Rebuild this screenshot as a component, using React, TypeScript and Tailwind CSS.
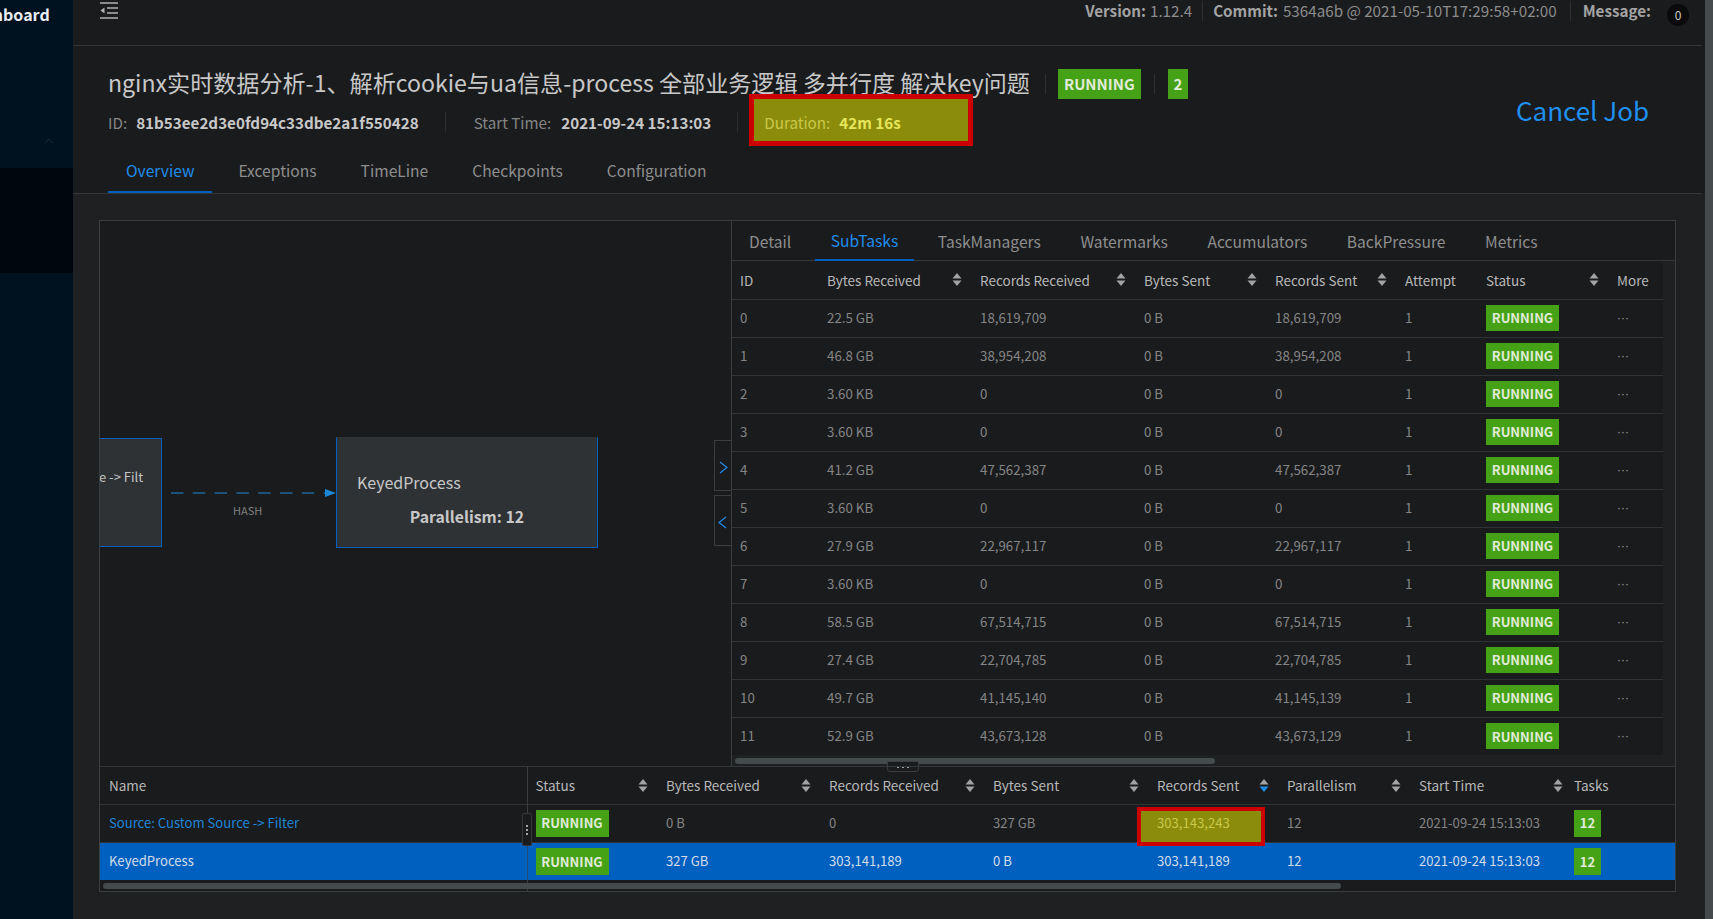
import type { ReactNode } from "react";

const font = { fontFamily: '"Noto Sans CJK SC", "Noto Sans", sans-serif' };

type Col = { title: string; width: number; sort?: boolean; active?: boolean; iconRight?: number };

const subtaskCols: Col[] = [
  { title: "ID", width: 87 },
  { title: "Bytes Received", width: 153, sort: true },
  { title: "Records Received", width: 164, sort: true },
  { title: "Bytes Sent", width: 131, sort: true },
  { title: "Records Sent", width: 130, sort: true },
  { title: "Attempt", width: 81 },
  { title: "Status", width: 131, sort: true },
  { title: "More", width: 54 },
];

const subtasks = [
  ["0", "22.5 GB", "18,619,709", "18,619,709"],
  ["1", "46.8 GB", "38,954,208", "38,954,208"],
  ["2", "3.60 KB", "0", "0"],
  ["3", "3.60 KB", "0", "0"],
  ["4", "41.2 GB", "47,562,387", "47,562,387"],
  ["5", "3.60 KB", "0", "0"],
  ["6", "27.9 GB", "22,967,117", "22,967,117"],
  ["7", "3.60 KB", "0", "0"],
  ["8", "58.5 GB", "67,514,715", "67,514,715"],
  ["9", "27.4 GB", "22,704,785", "22,704,785"],
  ["10", "49.7 GB", "41,145,140", "41,145,139"],
  ["11", "52.9 GB", "43,673,128", "43,673,129"],
];

const vertexCols: Col[] = [
  { title: "Status", width: 131, sort: true },
  { title: "Bytes Received", width: 163, sort: true },
  { title: "Records Received", width: 164, sort: true },
  { title: "Bytes Sent", width: 164, sort: true },
  { title: "Records Sent", width: 130, sort: true, active: true },
  { title: "Parallelism", width: 132, sort: true },
  { title: "Start Time", width: 155, sort: true, iconRight: 3 },
  { title: "Tasks", width: 109 },
];

const SortIcon = ({ active }: { active?: boolean }) => (
  <svg width="10" height="15" viewBox="0 0 10 15" className="shrink-0">
    <path d="M5 1 9.5 6.5H.5z" fill="#a3a3a3" />
    <path d="M.5 8.5h9L5 14z" fill={active ? "#1f8ceb" : "#a3a3a3"} />
  </svg>
);

const Badge = ({ children, className }: { children: ReactNode; className: string }) => (
  <span className={`inline-flex items-center justify-center bg-[#45a116] font-bold text-[#e0ebd8] ${className}`}>
    {children}
  </span>
);

const HeadCell = ({ col }: { col: Col }) => (
  <th className="px-2 text-left font-normal">
    <div className="flex items-center justify-between">
      <span className="whitespace-nowrap text-[13.5px] text-[#b8b8b8]">{col.title}</span>
      {col.sort && (
        <span className={col.iconRight ? "mr-[-5px]" : "mr-[2px]"}>
          <SortIcon active={col.active} />
        </span>
      )}
    </div>
  </th>
);

const Sep = ({ className = "" }: { className?: string }) => (
  <span className={`inline-block h-[20px] w-px bg-[#2b2e30] ${className}`} />
);

const SubtaskTable = () => (
  <table className="w-[931px] table-fixed border-collapse">
    <colgroup>
      {subtaskCols.map((c) => (
        <col key={c.title} style={{ width: c.width }} />
      ))}
    </colgroup>
    <thead>
      <tr className="h-[38px] border-b border-[#303437]">
        {subtaskCols.map((c) => (
          <HeadCell key={c.title} col={c} />
        ))}
      </tr>
    </thead>
    <tbody className="text-[13.3px] text-[#858585]">
      {subtasks.map((r) => (
        <tr key={r[0]} className="h-[38px] border-b border-[#303437] last:border-b-0">
          <td className="px-2">{r[0]}</td>
          <td className="px-2">{r[1]}</td>
          <td className="px-2">{r[2]}</td>
          <td className="px-2">0 B</td>
          <td className="px-2">{r[3]}</td>
          <td className="px-2">1</td>
          <td className="px-2">
            <Badge className="h-[26px] w-[73px] align-middle text-[13px]">RUNNING</Badge>
          </td>
          <td className="px-2 font-['Liberation_Sans'] text-[12px] text-[#9a9a9a]">···</td>
        </tr>
      ))}
    </tbody>
  </table>
);

const VertexTable = () => (
  <table className="w-[1575px] table-fixed border-collapse">
    <colgroup>
      <col style={{ width: 427 }} />
      {vertexCols.map((c) => (
        <col key={c.title} style={{ width: c.width }} />
      ))}
    </colgroup>
    <thead>
      <tr className="h-[37px] border-b border-[#303437]">
        <th className="border-r border-[#3a3e40] pl-[9px] text-left text-[13.5px] font-normal text-[#b8b8b8]">Name</th>
        {vertexCols.map((c) => (
          <HeadCell key={c.title} col={c} />
        ))}
      </tr>
    </thead>
    <tbody className="text-[13.1px] text-[#858585]">
      <tr className="h-[38px] border-b border-[#303437]">
        <td className="border-r border-[#3a3e40] pl-[9px] text-[#1f86d8]">Source: Custom Source -&gt; Filter</td>
        <td className="px-2">
          <Badge className="h-[27px] w-[73px] align-middle text-[13px]">RUNNING</Badge>
        </td>
        <td className="px-2">0 B</td>
        <td className="px-2">0</td>
        <td className="px-2">327 GB</td>
        <td className="relative px-2">
          {/* red annotation drawn over the cell */}
          <div className="absolute left-[-12px] right-[14px] top-[2px] h-[39px] border-[4px] border-[#cc0000] bg-[#8c8c0c]" />
          <span className="relative text-[#c9c84a]">303,143,243</span>
        </td>
        <td className="px-2">12</td>
        <td className="px-2">2021-09-24 15:13:03</td>
        <td className="px-2">
          <Badge className="h-[27px] w-[27px] align-middle text-[13px]">12</Badge>
        </td>
      </tr>
      <tr className="h-[38px] bg-[#0060c0] text-[#d3dde8]">
        <td className="border-r border-[#1d4a78] pl-[9px]">KeyedProcess</td>
        <td className="px-2">
          <Badge className="h-[27px] w-[73px] align-middle text-[13px]">RUNNING</Badge>
        </td>
        <td className="px-2">327 GB</td>
        <td className="px-2">303,141,189</td>
        <td className="px-2">0 B</td>
        <td className="px-2">303,141,189</td>
        <td className="px-2">12</td>
        <td className="px-2">2021-09-24 15:13:03</td>
        <td className="px-2">
          <Badge className="h-[27px] w-[27px] align-middle text-[13px]">12</Badge>
        </td>
      </tr>
    </tbody>
  </table>
);

const Graph = () => (
  <div className="relative h-[545px] w-[631px] overflow-hidden">
    {/* nodes sit on a free canvas */}
    <div className="absolute left-[-40px] top-[217px] flex h-[109px] w-[102px] border border-[#0060c0] bg-[#2e3235] pl-[38px] pt-[28px] text-[13px] text-[#c4c4c4]">
      <span className="whitespace-nowrap">e -&gt; Filt</span>
    </div>
    <svg className="absolute left-[71px] top-[262px]" width="166" height="20" viewBox="0 0 166 20">
      <line x1="0" y1="10" x2="154" y2="10" stroke="#1e88d8" strokeWidth="1" strokeDasharray="12.5 9.3" />
      <path d="M154 6 165 10 154 14z" fill="#1e88d8" />
    </svg>
    <span className="absolute left-[133px] top-[281px] text-[11px] text-[#808080]">HASH</span>
    <div className="absolute left-[236px] top-[216px] h-[111px] w-[262px] border border-[#0060c0] border-t-[#2e3235] bg-[#2e3235] text-[#c8c8c8]">
      <div className="pl-[20px] pt-[32px] text-[16px] leading-[24px]">KeyedProcess</div>
      <div className="mt-[11px] text-center text-[15.8px] font-bold leading-[24px]">Parallelism: 12</div>
    </div>
    <div className="absolute right-0 top-[219px] flex h-[51px] w-[17px] items-center justify-center border border-r-0 border-[#3a3e40] pt-[4px]">
      <svg width="9" height="13" viewBox="0 0 9 13" fill="none" stroke="#1f8ceb" strokeWidth="1.2">
        <path d="M1 1l7 5.5L1 12" />
      </svg>
    </div>
    <div className="absolute right-0 top-[274px] flex h-[51px] w-[17px] items-center justify-center border border-r-0 border-[#3a3e40] pr-[1px] pt-[4px]">
      <svg width="9" height="13" viewBox="0 0 9 13" fill="none" stroke="#1f8ceb" strokeWidth="1.2">
        <path d="M8 1L1 6.5 8 12" />
      </svg>
    </div>
  </div>
);

const drawerTabs = ["Detail", "SubTasks", "TaskManagers", "Watermarks", "Accumulators", "BackPressure", "Metrics"];
const jobTabs = ["Overview", "Exceptions", "TimeLine", "Checkpoints", "Configuration"];

export default function App() {
  return (
    <div className="flex h-[919px] w-[1713px] overflow-hidden bg-[#1e2021]" style={font}>
      {/* sidebar */}
      <aside className="w-[73px] shrink-0 bg-[#001120]">
        <div className="h-[168px] overflow-hidden">
          <div className="ml-[-36px] flex h-[28px] items-center whitespace-nowrap text-[16px] font-bold text-[#e8edf2]">Dashboard</div>
          <svg className="ml-[44px] mt-[110px]" width="10" height="6" viewBox="0 0 10 6" fill="none" stroke="#1c2a36">
            <path d="M1 5l4-4 4 4" />
          </svg>
        </div>
        <div className="h-[105px] bg-[#00060e]" />
      </aside>

      <main className="flex w-[1632px] shrink-0 flex-col">
        <div className="bg-[#1a1b1d]">
          {/* top bar */}
          <div className="mr-[3px] flex h-[46px] items-start justify-between border-b border-[#34373a] pl-[27px]">
            <svg className="mt-[1px]" width="18" height="18" viewBox="0 0 18 18" fill="none" stroke="#b3b3b3" strokeWidth="1.4">
              <path d="M0 2h18M7 7h11M7 12h11M0 17h18" />
              <path d="M4.5 6.5v6L0.5 9.5z" fill="#b3b3b3" stroke="none" />
            </svg>
            <div className="flex h-[21px] items-center text-[15.2px] text-[#8c8c8c]">
              <b className="text-[#a3a3a3]">Version:</b>
              <span className="ml-[4px]">1.12.4</span>
              <Sep className="mx-[10px]" />
              <b className="text-[#a3a3a3]">Commit:</b>
              <span className="ml-[5px]">5364a6b @ 2021-05-10T17:29:58+02:00</span>
              <Sep className="ml-[13px] mr-[12px]" />
              <b className="text-[#a3a3a3]">Message:</b>
              <span className="ml-[16px] mr-[13px] mt-[8px] flex h-[22px] w-[22px] items-center justify-center rounded-full bg-[#0a0a0a] text-[12px] text-[#c8c8c8]">0</span>
            </div>
          </div>

          {/* job header */}
          <div className="mr-[3px] border-b border-[#34373a]">
            <div className="flex h-[106px] justify-between pl-[35px]">
              <div className="pt-[23px]">
                <div className="flex h-[30px] items-center">
                  <h1 className="mt-[-4px] whitespace-nowrap text-[23.1px] font-normal text-[#c8c8c8]">nginx实时数据分析-1、解析cookie与ua信息-process 全部业务逻辑 多并行度 解决key问题</h1>
                  <Sep className="ml-[15px]" />
                  <Badge className="ml-[12px] h-[30px] w-[83px] text-[15px]">RUNNING</Badge>
                  <Sep className="mx-[13px]" />
                  <Badge className="h-[30px] w-[20px] text-[15px]">2</Badge>
                </div>
                <div className="mt-[-5px] flex h-[52px] items-center text-[15.2px] text-[#858585]">
                  <span className="mt-[4px]">ID:</span>
                  <b className="ml-[9px] mt-[4px] text-[#c8c8c8]">81b53ee2d3e0fd94c33dbe2a1f550428</b>
                  <Sep className="ml-[26px] mt-[4px]" />
                  <span className="ml-[28px] mt-[4px]">Start Time:</span>
                  <b className="ml-[10px] mt-[4px] text-[#c8c8c8]">2021-09-24 15:13:03</b>
                  <Sep className="ml-[26px] mt-[4px]" />
                  <div className="ml-[11px] flex h-[52px] w-[224px] items-center border-[5px] border-[#cc0000] bg-[#8c8c0c] pl-[10px] pt-[4px] text-[#c9c84a]">
                    Duration:
                    <b className="ml-[9px] text-[#e6e65c]">42m 16s</b>
                  </div>
                </div>
              </div>
              <a className="mr-[53px] mt-[46px] h-[36px] text-[26px] leading-[36px] text-[#2090f0]">Cancel Job</a>
            </div>
            <div className="flex h-[41px] gap-[8px] pl-[35px]">
              {jobTabs.map((t, i) => (
                <div
                  key={t}
                  className={
                    i === 0
                      ? "border-b-2 border-[#0060c0] px-[18px] pt-[7px] text-[15.6px] text-[#1f8ceb]"
                      : "px-[18px] pt-[7px] text-[15.6px] text-[#8e8e8e]"
                  }
                >
                  {t}
                </div>
              ))}
            </div>
          </div>
        </div>

        {/* job overview panel */}
        <div className="ml-[26px] mt-[26px] w-[1577px] border border-[#3a3e40] bg-[#1a1b1d]">
          <div className="flex h-[545px]">
            <Graph />
            <section className="relative flex w-[944px] flex-col border-l border-[#3a3e40]">
              <div className="flex h-[40px] shrink-0 items-center gap-[7.6px] border-b border-[#34373a] pl-[1px]">
                {drawerTabs.map((t, i) => (
                  <div
                    key={t}
                    className={
                      i === 1
                        ? "flex h-[40px] items-center border-b-2 border-[#0060c0] px-[16px] pt-[2px] text-[15.6px] text-[#1f8ceb]"
                        : "flex h-[40px] items-center px-[16px] pt-[2px] text-[15.6px] text-[#8e8e8e]"
                    }
                  >
                    {t}
                  </div>
                ))}
              </div>
              <div className="flex-1 bg-[#1e2021]">
                <div className="w-[931px] bg-[#1a1b1d]">
                  <SubtaskTable />
                </div>
              </div>
              <div className="absolute bottom-[2px] left-[3px] h-[6px] w-[480px] rounded-full bg-[#454a4c]" />
              <div className="absolute bottom-[-6px] left-[155px] flex h-[11px] w-[32px] items-center justify-center gap-[3px] rounded-b-[3px] border border-[#3a3e40] bg-[#1a1b1d]">
                <span className="h-[2px] w-[2px] bg-[#a3a3a3]" />
                <span className="h-[2px] w-[2px] bg-[#a3a3a3]" />
                <span className="h-[2px] w-[2px] bg-[#a3a3a3]" />
              </div>
            </section>
          </div>

          <div className="relative border-t border-[#34373a]">
            <VertexTable />
            <div className="h-[11px]">
              <div className="absolute bottom-[2px] left-[3px] h-[6px] w-[1238px] rounded-full bg-[#454a4c]" />
              <div className="ml-[427px] h-[11px] w-px bg-[#3a3e40]" />
            </div>
            <div className="absolute left-[422px] top-[46px] flex h-[33px] w-[10px] flex-col items-center justify-center gap-[2px] rounded-[2px] border border-[#34373a] bg-[#1a1b1d]">
              <span className="h-[2px] w-[2px] bg-[#a3a3a3]" />
              <span className="h-[2px] w-[2px] bg-[#a3a3a3]" />
              <span className="h-[2px] w-[2px] bg-[#a3a3a3]" />
            </div>
          </div>
        </div>
      </main>

      {/* page scrollbar */}
      <div className="w-[8px] shrink-0 bg-[#454b4d]" />
    </div>
  );
}
